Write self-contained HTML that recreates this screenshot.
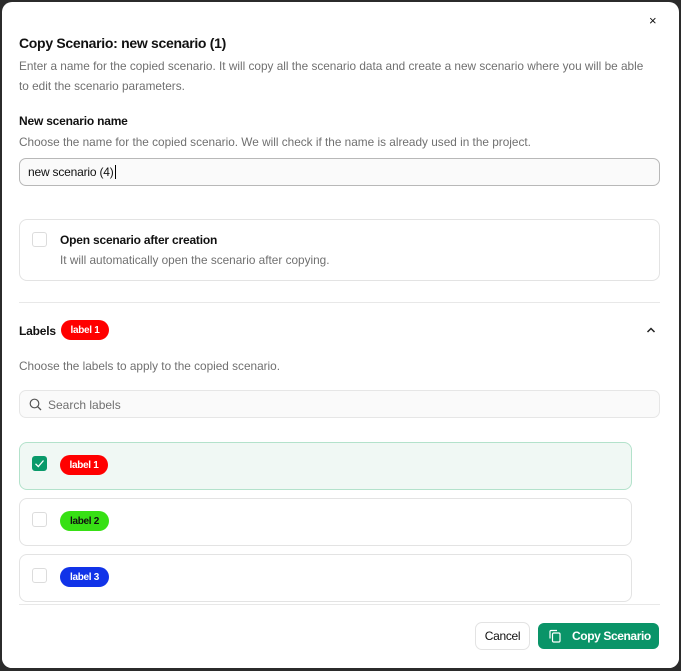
<!DOCTYPE html>
<html><head><style>
*{margin:0;padding:0;box-sizing:border-box}
body{width:681px;height:671px;background:#2b2b2b;font-family:"Liberation Sans",sans-serif;position:relative;overflow:hidden;color:#111}
.dlg{position:absolute;left:2px;top:2px;width:677px;height:666px;background:#fff;border-radius:10px;overflow:hidden}
.a{position:absolute;white-space:nowrap}
.g{color:#707070;font-size:11.8px;letter-spacing:0}
.box{position:absolute;border:1px solid #e3e3e3;border-radius:8px;background:#fff}
.cb{position:absolute;width:15px;height:15px;border:1px solid #dcdcdc;border-radius:3px;background:#fff}
.badge{position:absolute;height:20px;border-radius:10px;font-size:10px;font-weight:bold;display:flex;align-items:center;justify-content:center;letter-spacing:-0.3px}
</style></head><body>
<div class="dlg">
<div class="a" style="left:647px;top:11px;font-size:13px">×</div>
<div class="a" style="left:17px;top:33px;font-size:14px;font-weight:bold;letter-spacing:-0.3px">Copy Scenario: new scenario (1)</div>
<div class="a g" style="left:17px;top:57px">Enter a name for the copied scenario. It will copy all the scenario data and create a new scenario where you will be able</div>
<div class="a g" style="left:17px;top:77px">to edit the scenario parameters.</div>
<div class="a" style="left:17px;top:112px;font-size:12px;font-weight:bold;letter-spacing:-0.2px">New scenario name</div>
<div class="a g" style="left:17px;top:133px">Choose the name for the copied scenario. We will check if the name is already used in the project.</div>
<div style="position:absolute;left:17px;top:156px;width:641px;height:28px;border:1.5px solid #b8b8b8;border-radius:7px;background:#fafafa"></div>
<div class="a" style="left:26px;top:163px;font-size:12px;letter-spacing:-0.2px">new scenario (4)<span style="border-left:1px solid #000;margin-left:1px"></span></div>

<div class="box" style="left:17px;top:217px;width:641px;height:62px"></div>
<div class="cb" style="left:30px;top:230px"></div>
<div class="a" style="left:58px;top:231px;font-size:12px;font-weight:bold;letter-spacing:-0.2px">Open scenario after creation</div>
<div class="a g" style="left:58px;top:251px">It will automatically open the scenario after copying.</div>

<div style="position:absolute;left:17px;top:300px;width:641px;height:1px;background:#e8e8e8"></div>
<div class="a" style="left:17px;top:322px;font-size:12px;font-weight:bold;letter-spacing:-0.2px">Labels</div>
<div class="badge" style="left:59px;top:318px;width:48px;background:#ff0000;color:#fff">label 1</div>
<svg class="a" style="left:643px;top:322px" width="12" height="12" viewBox="0 0 12 12"><path d="M2.5 8 L6 4.5 L9.5 8" fill="none" stroke="#222" stroke-width="1.5"/></svg>
<div class="a g" style="left:17px;top:357px">Choose the labels to apply to the copied scenario.</div>
<div style="position:absolute;left:17px;top:388px;width:641px;height:28px;border:1px solid #e6e6e6;border-radius:7px;background:#fafafa"></div>
<svg class="a" style="left:27px;top:396px" width="13" height="13" viewBox="0 0 13 13"><circle cx="5.5" cy="5.5" r="4.3" fill="none" stroke="#555" stroke-width="1.2"/><path d="M8.7 8.7 L12 12" stroke="#555" stroke-width="1.3"/></svg>
<div class="a g" style="left:46px;top:396px;font-size:12px">Search labels</div>

<div class="box" style="left:17px;top:440px;width:613px;height:48px;background:#f0f8f4;border-color:#b3e2cb"></div>
<div class="cb" style="left:30px;top:454px;background:#0a9a6a;border-color:#0a9a6a"></div>
<svg class="a" style="left:30px;top:454px" width="15" height="15" viewBox="0 0 15 15"><path d="M3.5 7.8 L6.3 10.5 L11.5 4.5" fill="none" stroke="#fff" stroke-width="1.3"/></svg>
<div class="badge" style="left:58px;top:453px;width:48px;background:#ff0000;color:#fff">label 1</div>

<div class="box" style="left:17px;top:496px;width:613px;height:48px"></div>
<div class="cb" style="left:30px;top:510px"></div>
<div class="badge" style="left:58px;top:509px;width:49px;background:#37e014;color:#111">label 2</div>

<div class="box" style="left:17px;top:552px;width:613px;height:48px"></div>
<div class="cb" style="left:30px;top:566px"></div>
<div class="badge" style="left:58px;top:565px;width:49px;background:#1133e8;color:#fff">label 3</div>

<div style="position:absolute;left:0;top:602px;width:677px;height:64px;background:#fff"></div>
<div style="position:absolute;left:17px;top:602px;width:641px;height:1px;background:#e8e8e8"></div>
<div style="position:absolute;left:473px;top:620px;width:55px;height:28px;border:1px solid #e3e3e3;border-radius:7px;background:#fff;font-size:12px;line-height:26px;text-align:center;letter-spacing:-0.3px">Cancel</div>
<div style="position:absolute;left:536px;top:621px;width:121px;height:26px;border-radius:6px;background:#0a9468;color:#fff;font-size:12px;font-weight:bold;line-height:26px;letter-spacing:-0.4px;padding-left:34px">Copy Scenario</div>
<svg class="a" style="left:546px;top:627px" width="14" height="14" viewBox="0 0 14 14"><path d="M2 9.5 V2.5 A1 1 0 0 1 3 1.5 H9" fill="none" stroke="#fff" stroke-width="1.2"/><rect x="4.5" y="4" width="7.5" height="9" rx="1.2" fill="none" stroke="#fff" stroke-width="1.2"/></svg>
</div>
</body></html>
